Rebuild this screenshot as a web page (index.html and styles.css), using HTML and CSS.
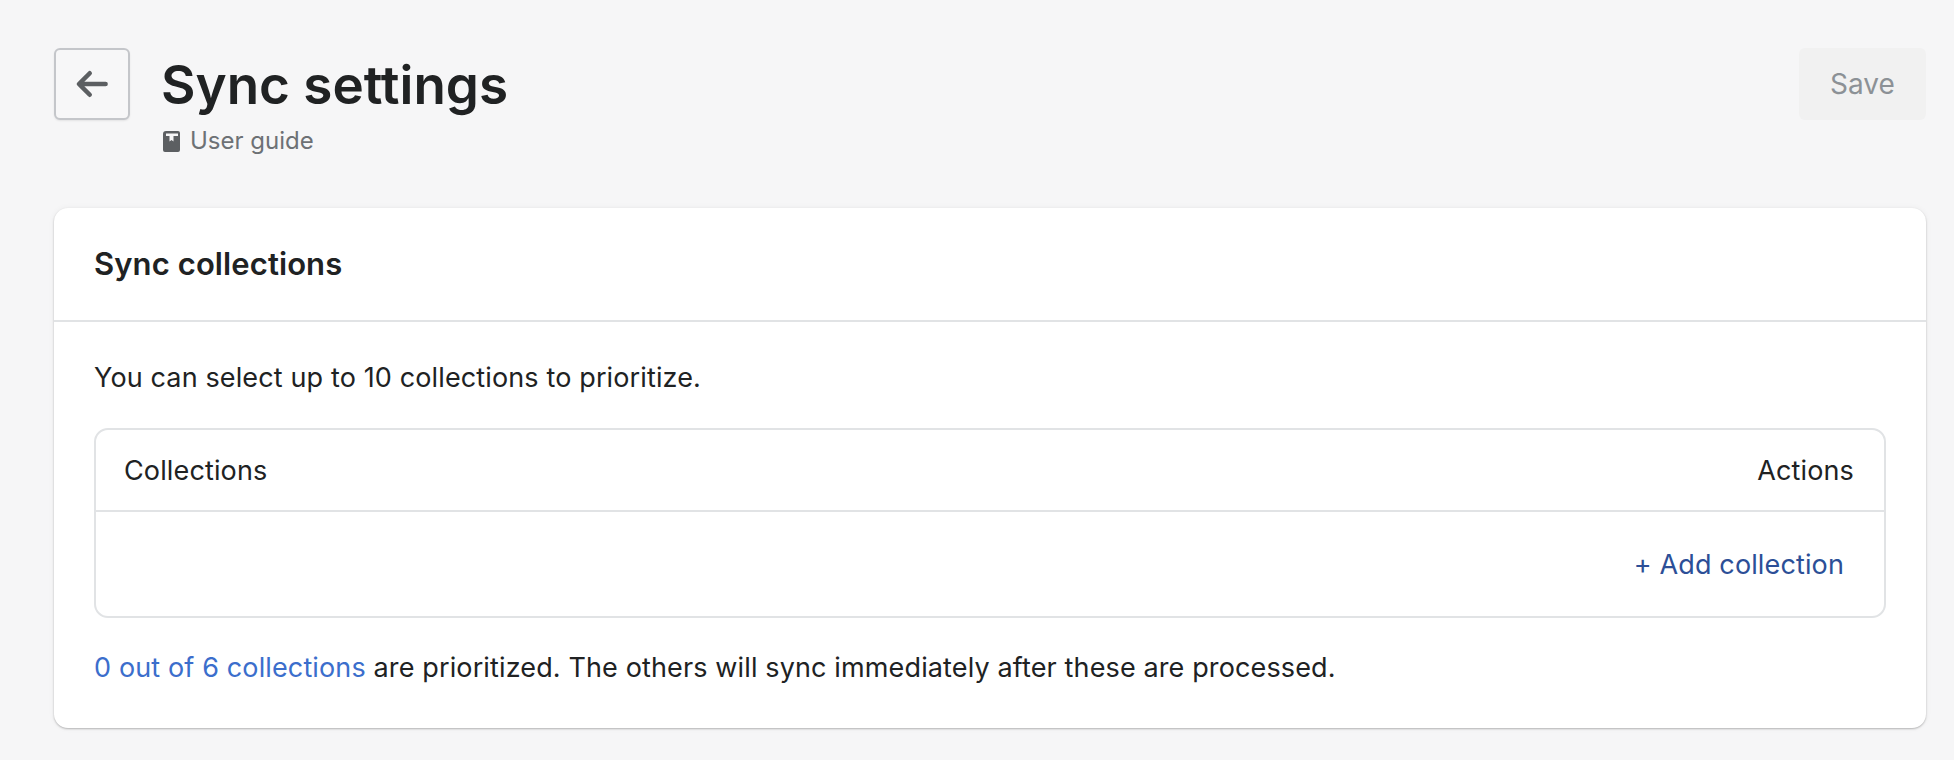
FILE: index.html
```html
<!DOCTYPE html>
<html lang="en">
<head>
<meta charset="utf-8">
<title>Sync settings</title>
<link rel="stylesheet" href="styles.css">
</head>
<body>
<main class="page">
  <header class="page-header">
    <button class="back-button" type="button" aria-label="Back">
      <svg class="back-icon" viewBox="0 0 30 30" aria-hidden="true"><path d="M27 15H4M13 5.500 3.500 15l9.500 9.500" fill="none" stroke="currentColor" stroke-width="4" stroke-linecap="round" stroke-linejoin="round"/></svg>
    </button>
    <div class="title-block">
      <h1 class="page-title">Sync settings</h1>
      <a class="guide-link" href="#">
        <svg class="guide-icon" viewBox="0 0 17 21" aria-hidden="true"><path fill-rule="evenodd" d="M3 0h12a2 2 0 0 1 2 2v17a2 2 0 0 1-2 2H2a2 2 0 0 1-2-2V3a3 3 0 0 1 3-3zm0 2.500V5h3.500v5.500L8.500 9l2 1.500V5H15V2.500z"/></svg>
        <span>User guide</span>
      </a>
    </div>
    <button class="save-button" type="button" disabled>Save</button>
  </header>

  <section class="card">
    <div class="card-header"><h2 class="card-title">Sync collections</h2></div>
    <div class="card-body">
      <p class="intro">You can select up to 10 collections to prioritize.</p>
      <div class="table">
        <div class="table-head"><span>Collections</span><span>Actions</span></div>
        <div class="table-row"><a class="add-link" href="#">+ Add collection</a></div>
      </div>
      <p class="status"><a class="status-link" href="#">0 out of 6 collections</a> are prioritized. The others will sync immediately after these are processed.</p>
    </div>
  </section>
</main>
</body>
</html>
```

FILE: styles.css
```css
* { box-sizing: border-box; }
html, body { margin: 0; height: 100%; }
body {
  background: #f6f6f7;
  color: #202223;
  font-family: Inter, "Liberation Sans", sans-serif;
  font-size: 27px;
  letter-spacing: 0.13px;
  line-height: 34px;
  overflow: hidden;
}
.page { padding: 48px 28px 0 54px; }
.page-header { display: flex; align-items: flex-start; height: 160px; }
.back-button {
  width: 76px; height: 72px; padding: 0;
  display: flex; align-items: center; justify-content: center;
  background: #f7f7f8; color: #5c5f62;
  border: 2px solid #c4c6ca; border-radius: 6px;
  box-shadow: 0 1px 2px rgba(0,0,0,.08);
}
.back-icon { width: 34px; height: 34px; }
.title-block { margin-left: 31px; flex: 1; }
.page-title { margin: 0; font-size: 53px; line-height: 74px; font-weight: 600; letter-spacing: 0; }
.guide-link { display: flex; align-items: center; gap: 10px; margin-top: 3px; color: #6d7175; text-decoration: none; font-size: 24px; letter-spacing: 0; line-height: 32px; }
.guide-icon { width: 17px; height: 21px; fill: #5c5f62; margin-left: 2px; }
.save-button {
  width: 127px; height: 72px; padding: 0;
  background: #f1f1f1; color: #8c9196; border: 0; border-radius: 6px;
  font: inherit; font-size: 28px;
}
.card { background: #fff; border-radius: 14px; height: 520px; box-shadow: 0 1px 2px rgba(0,0,0,.25), 0 0 6px rgba(0,0,0,.05); }
.card-header { height: 114px; display: flex; align-items: center; padding: 0 40px; border-bottom: 2px solid #e1e3e5; }
.card-title { margin: 0; font-size: 31px; line-height: 40px; font-weight: 600; letter-spacing: 0.1px; }
.card-body { padding: 39px 40px 0; }
.intro, .status { margin: 0; }
.table { margin-top: 33px; height: 190px; border: 2px solid #e1e3e5; border-radius: 14px; }
.table-head { height: 82px; display: flex; justify-content: space-between; align-items: center; padding: 2px 30px 0 28px; border-bottom: 2px solid #e1e3e5; }
.table-row { height: 104px; display: flex; justify-content: flex-end; align-items: center; padding: 2px 40px 0; }
.add-link { color: #2c4f97; text-decoration: none; }
.status { margin-top: 33px; }
.status-link { color: #3b6ecc; text-decoration: none; }
```
